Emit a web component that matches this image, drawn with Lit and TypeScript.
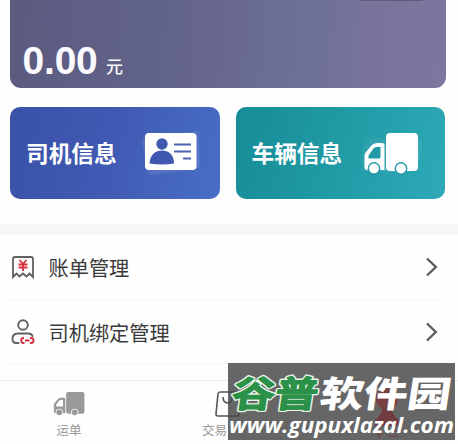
import { LitElement, html, css, svg } from "lit";
import { customElement, property } from "lit/decorators.js";

const truck = (body: string, gap: string) => svg`
  <rect x="22" y="0" width="32" height="38" rx="4" fill=${body}/>
  <path d="M20.500 37H3Q.5 37 .5 34V23Q.5 21 2 19L7.500 12.500Q9.500 10 13 10H18Q20.500 10 20.500 12.500Z" fill=${body}/>
  <path d="M4.500 22.500L9.500 15.500Q10.500 14 12.500 14H16.500V24Q16.500 25.500 15 25.500H4.500Z" fill=${gap}/>
  <circle cx="10" cy="35.500" r="6.400" fill=${gap}/><circle cx="10" cy="35.500" r="5" fill=${body}/>
  <circle cx="37" cy="35.500" r="6.400" fill=${gap}/><circle cx="37" cy="35.500" r="5" fill=${body}/>`;

@customElement("menu-row")
class MenuRow extends LitElement {
  @property() label = "";
  static styles = css`
    :host { display: flex; align-items: center; height: 64px; margin: 0 13px 0 10px; border-bottom: 1px solid #f5f5f5; }
    .label { flex: 1; margin: 3px 0 0 12.500px; font-size: 20.200px; line-height: 30px; color: #3a3a3a; }
    .chevron { margin-right: 7px; }
    svg { display: block; }
  `;
  render() {
    return html`
      <slot name="icon"></slot>
      <span class="label">${this.label}</span>
      <svg class="chevron" width="13" height="20" viewBox="0 0 13 20" fill="none" stroke="#5c5c5c" stroke-width="2.400"><path d="M2 1.500L10.800 10L2 18.500"/></svg>
    `;
  }
}

@customElement("app-root")
class AppRoot extends LitElement {
  static styles = css`
    :host {
      display: flex; flex-direction: column; position: relative; width: 458px; height: 444px;
      overflow: hidden; background: #fefefe;
      font-family: "Liberation Sans", "Noto Sans CJK SC", sans-serif;
    }
    svg { display: block; }
    .balance {
      box-sizing: border-box; height: 88px; margin: 0 12.500px 0 10px; padding: 39px 0 0 12.500px;
      border-radius: 0 0 11px 11px; color: #fafaff; position: relative;
      background: linear-gradient(95deg, #5b5b80 0%, #62638a 35%, #69698f 52%, #6b6e96 60%, #6e7097 70%, #77739b 80%, #7b779f 100%);
      display: flex; align-items: flex-start;
    }
    .amount { font-size: 39px; line-height: 44px; font-weight: 700; letter-spacing: -0.200px; }
    .unit { font-size: 17px; line-height: 24px; margin: 17px 0 0 8.500px; font-weight: 500; }
    .edge { position: absolute; top: 0; right: 23px; width: 64px; height: 1px; background: #615c77; border-radius: 0 0 3px 3px; }
    .tiles { display: grid; grid-template-columns: 210px 209.500px; gap: 15.500px; margin: 19px 0 25px 10px; }
    .tile { height: 92px; border-radius: 10px; display: flex; align-items: center; color: #fff; }
    .driver { background: linear-gradient(105deg, #3a51a8, #4059b2 45%, #486ec6); }
    .vehicle { background: linear-gradient(105deg, #168d98, #1f99a3 45%, #2fa9b8); }
    .title { width: 92px; margin: 1px 0 0 16px; font-size: 22.700px; line-height: 32px; font-weight: 700; white-space: nowrap; }
    .vehicle .title { margin-left: 16px; }
    .card { margin-left: 24px; }
    .truck { margin: 1px 0 0 18px; }
    .band { height: 11px; background: #f6f6f6; }
    .rows { height: 145px; }
    .tabs { flex: 1; border-top: 1px solid #ececec; display: flex; color: #999; font-size: 12.500px; line-height: 18px; }
    .tab { display: flex; flex-direction: column; align-items: center; width: 138px; padding-top: 11px; box-sizing: border-box; }
    .tab span { margin-top: 6px; }
    .trade { width: 52px; margin-left: 64px; padding-top: 10px; }
    .trade span { margin-top: 5px; align-self: flex-start; }
    .watermark { position: absolute; left: 228px; top: 363px; }
  `;

  render() {
    return html`
      <section class="balance">
        <span class="amount">0.00</span><span class="unit">元</span><i class="edge"></i>
      </section>
      <section class="tiles">
        <div class="tile driver">
          <span class="title">司机信息</span>
          <svg class="card" width="60" height="48" viewBox="0 0 60 48">
            <path d="M0 10L54 2Q57 2 57 5L58 36Q58 39 55 40L10 46Q6 46 5 42Z" fill="#fff" opacity=".09"/>
            <rect x="3" y="4" width="51.500" height="37" rx="4" fill="#fff"/>
            <g fill="#4059b0"><circle cx="20" cy="15" r="5.700"/><path d="M7.500 34.500C8 25 14 21.500 20 21.500S32 25 32 34.500Q20 36.500 7.500 34.500Z"/></g>
            <path d="M32 15.500H49M32 22.500H49M41 29.500H49" stroke="#4c62b1" stroke-width="1.800"/>
          </svg>
        </div>
        <div class="tile vehicle">
          <span class="title">车辆信息</span>
          <svg class="truck" width="60" height="44" viewBox="-2 -1 60 44">
            <path d="M-2 17Q2 5 14 5H54Q61 8 56 25Q54 38 45 39H2Q-5 30-2 17Z" fill="#fff" opacity=".06"/>
            ${truck("#fff", "#219aa5")}
          </svg>
        </div>
      </section>
      <div class="band"></div>
      <section class="rows">
        <menu-row label="账单管理">
          <svg slot="icon" width="26" height="28" viewBox="0 0 26 28" fill="none">
            <path d="M3 24V6Q3 4 5 4H21Q23 4 23 6V24L19.500 20.500L16.500 23.500L13 20.500L9.500 23.500L6.500 20.500Z" stroke="#606060" stroke-width="1.800"/>
            <path d="M9.500 7L13 11L16.500 7M8.500 11.500H17.500M8.500 14.500H17.500M13 11V18" stroke="#d5303d" stroke-width="1.800"/>
          </svg>
        </menu-row>
        <menu-row label="司机绑定管理">
          <svg slot="icon" width="26" height="28" viewBox="0 0 26 28" fill="none" stroke-width="1.900">
            <circle cx="13" cy="7" r="4.800" stroke="#606060"/>
            <path d="M8.500 25H6Q2.500 25 2.500 21Q2.500 15.500 8 15.500H18Q21.500 15.500 22.500 18" stroke="#606060" stroke-linecap="round"/>
            <path d="M14 20H13.500Q11.200 20 11.200 22.500T13.500 25H14.500M20 20H21Q23.500 20 23.500 22.500T21 25H20M15 22.500H19.500" stroke="#d5303d"/>
          </svg>
        </menu-row>
      </section>
      <nav class="tabs">
        <div class="tab">
          <svg width="32" height="24" viewBox="-1 0 56 42">${truck("#999", "#fefefe")}</svg>
          <span>运单</span>
        </div>
        <div class="tab trade">
          <svg width="26" height="26" viewBox="0 0 26 26" fill="none" stroke="#555" stroke-width="1.600">
            <path d="M5 1H21Q22.500 1 23 3L25 23Q25 25 23 25H3Q1 25 1 23L3 3Q3.500 1 5 1Z"/><path d="M8 6Q8 12 13 12T18 6"/>
          </svg>
          <span>交易</span>
        </div>
      </nav>
      <svg class="watermark" width="230" height="78" viewBox="0 0 230 78">
        <rect width="227" height="77" fill="#666"/>
        <path d="M0 17.500H227" stroke="#626262"/>
        <path d="M0 29H7Q9 29 9.300 31L11 51Q11 53 9 53H0M0 40Q4 39 4 34" fill="none" stroke="#484848" stroke-width="1.500"/>
        <circle cx="159" cy="36" r="11" fill="#793f43"/>
        <path d="M155 44H163Q164 52 171 57V63H147V57Q154 52 155 44Z" fill="#713d41"/>
        <path d="M148 71H155M151 67V75M160 68H170M160 73H170" stroke="#713d41"/>
        <g transform="translate(2.500 44) scale(1 .95) skewX(-8)" font-family="Noto Sans CJK SC" font-size="38" stroke-linejoin="round">
          <text x="0" y="0" textLength="86" lengthAdjust="spacingAndGlyphs" font-weight="700" fill="#2c9148" stroke="#e8f4e9" stroke-width="4" paint-order="stroke">谷普</text>
          <text x="0" y="0" textLength="86" lengthAdjust="spacingAndGlyphs" font-weight="700" fill="#2c9148" stroke="#2c9148" stroke-width="1.200" aria-hidden="true">谷普</text>
          <text x="88" y="0" textLength="131" lengthAdjust="spacingAndGlyphs" font-weight="900" fill="#fff">软件园</text>
        </g>
        <text x="1" y="70" textLength="225" lengthAdjust="spacingAndGlyphs" font-family="Open Sans" font-style="italic" font-weight="700" font-size="21" fill="#fff">www.gupuxlazal.com</text>
      </svg>
    `;
  }
}
